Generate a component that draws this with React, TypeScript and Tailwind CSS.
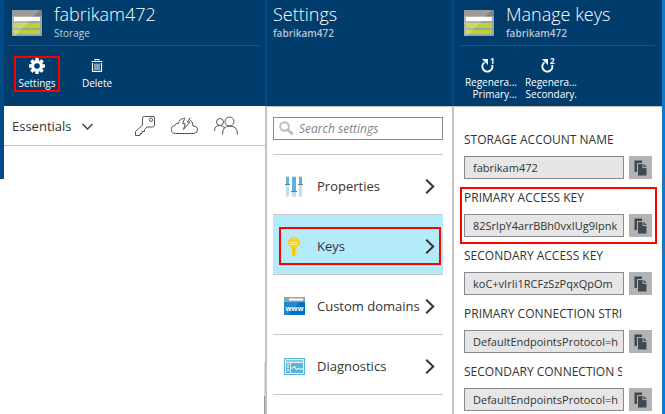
import type { ReactNode } from 'react';

function StorageIcon() {
  return (
    <svg className="h-[26px] w-[30px] shrink-0" viewBox="0 0 30 26" aria-hidden="true">
      <rect width="30" height="26" rx="1" fill="#a0a1a2" />
      <rect width="30" height="6" rx="1" fill="#7f8183" />
      <rect x="2" y="7" width="26" height="4" fill="#fff" />
      <rect x="2" y="13" width="26" height="5" fill="#b8d432" />
      <rect x="2" y="20" width="26" height="4" fill="#b8d432" />
      <path d="M0 0h28L3 26H0z" fill="#fff" fillOpacity=".22" />
    </svg>
  );
}

function GearIcon() {
  return (
    <svg className="h-4 w-4" viewBox="0 0 16 16" aria-hidden="true">
      <g fill="#fff">
        <rect x="6.3" y="0" width="3.4" height="16" rx=".6" />
        <rect x="6.3" y="0" width="3.4" height="16" rx=".6" transform="rotate(45 8 8)" />
        <rect x="6.3" y="0" width="3.4" height="16" rx=".6" transform="rotate(90 8 8)" />
        <rect x="6.3" y="0" width="3.4" height="16" rx=".6" transform="rotate(135 8 8)" />
        <circle cx="8" cy="8" r="6" />
      </g>
      <circle cx="8" cy="8" r="2.8" fill="#003c6c" />
    </svg>
  );
}

function TrashIcon() {
  return (
    <svg className="h-4 w-4" viewBox="0 0 16 16" fill="none" stroke="#fff" aria-hidden="true">
      <path d="M6 2.5V1.5h4v1M2.500 3.5h11M3.500 5v8.5h9V5" strokeWidth="1.200" />
      <path d="M6 5.500v7M8 5.500v7M10 5.500v7" />
    </svg>
  );
}

function RegenerateIcon({ index }: { index: string }) {
  return (
    <svg className="mr-1 h-4 w-4 overflow-visible" viewBox="0 0 16 16" aria-hidden="true">
      <path d="M4.5 5.5a5 5 0 1 0 7.6 2.5" fill="none" stroke="#fff" strokeWidth="2" />
      <path d="M2 2h6v6z" fill="#fff" />
      <text x="10" y="7" fontSize="8" fontWeight="700" fill="#fff">{index}</text>
    </svg>
  );
}

function Chevron() {
  return (
    <svg className="h-4 w-[10px] shrink-0" viewBox="0 0 10 16" fill="none" stroke="#333" strokeWidth="2" aria-hidden="true">
      <path d="M1.2 1.8L8.2 8.500L1.2 15.2" />
    </svg>
  );
}

function CopyIcon() {
  return (
    <svg className="h-4 w-[13px]" viewBox="0 0 13 16" aria-hidden="true">
      <path d="M.5 12V.5H8V3H3v9z" fill="#3f4954" />
      <path d="M4 4h4.5v4H12.5v7.5H4z" fill="#3f4954" />
      <path d="M9.5 3.8l3.2 3.2H9.5z" fill="#3f4954" />
    </svg>
  );
}

function PropertiesIcon() {
  return (
    <svg className="h-[21px] w-[18px]" viewBox="0 0 18 21" aria-hidden="true">
      <path d="M1 0h3v21H1zM7 0h4v21H7zM14 0h3v21h-3z" fill="#dfe3e5" />
      <path d="M1 9h3v11H1zM7 16h4v4H7zM14 9h3v11h-3z" fill="#b8e0f2" />
      <path d="M1 1h3v7H1zM7 1h4v14H7zM14 1h3v7h-3z" fill="#59b4d9" />
      <path d="M0 8h5v1H0zM6 15h6v1H6zM13 8h5v1h-5z" fill="#7a7a7a" />
    </svg>
  );
}

function YellowKeyIcon() {
  return (
    <svg className="h-[21px] w-[14px]" viewBox="0 0 14 21" aria-hidden="true">
      <path d="M7 0L10 1.500L13.500 6L12.500 9L9 12v1.500l1 1-1 1 1 1-1 1V19l-2 2-2-2v-7L1.500 9 .5 6 4 1.500z" fill="#fcd116" />
      <circle cx="7" cy="2.600" r="1.200" fill="#b3ebfb" />
      <path d="M3 6.500h8M3 8.500h8" stroke="#fbe98c" />
      <path d="M6.500 12v7" stroke="#e5b800" />
    </svg>
  );
}

function DomainIcon() {
  return (
    <svg className="h-[18px] w-[21px]" viewBox="0 0 21 18" aria-hidden="true">
      <rect width="21" height="18" fill="#0072c6" />
      <rect width="21" height="5" fill="#a0a1a2" />
      <path d="M5 1.500h14v2H5z" fill="#fff" />
      <circle cx="2.700" cy="2.500" r="1.700" fill="#59b4d9" />
      <path d="M0 5h16L4 18H0z" fill="#fff" fillOpacity=".15" />
      <text x="10.500" y="13.500" fontSize="7" fontWeight="700" fill="#fff" textAnchor="middle">www</text>
    </svg>
  );
}

function DiagnosticsIcon() {
  return (
    <svg className="h-[17px] w-[21px]" viewBox="0 0 21 17" aria-hidden="true">
      <rect width="21" height="17" fill="#59b4d9" />
      <path d="M1.500 1.500h18v14h-18zM1.500 4.500h18M6.500 4.500v11" fill="none" stroke="#e8f6fc" />
      <path d="M2 2.500h17v1H2z" fill="#b8e0f2" />
      <path d="M4 6v8" stroke="#fff" strokeWidth="1.500" strokeDasharray="1.500 1" />
      <path d="M7 10h2l1.500-2 2 4 1.500-2 1.500 1h3.500" fill="none" stroke="#fff" />
    </svg>
  );
}

function BladeTitle({ title, subtitle, strong, icon }: { title: string; subtitle: string; strong?: boolean; icon?: boolean }) {
  return (
    <div className="flex h-[45px] gap-3 px-1">
      {icon && <div className="pt-[10px]"><StorageIcon /></div>}
      <div className="min-w-0 pt-[2px] whitespace-nowrap">
        <h1 className="text-[18px] leading-6 font-light">{title}</h1>
        <p className={strong ? 'text-[10px] leading-[14px] font-semibold text-[#b9c6d3]' : 'text-[10px] leading-[14px] text-[#c4d0db]'}>{subtitle}</p>
      </div>
    </div>
  );
}

function Command({ label, children, highlighted }: { label: string; children: ReactNode; highlighted?: boolean }) {
  return (
    <button type="button" className={highlighted
      ? 'flex h-9 w-[46px] flex-col items-center border-2 border-[#f00] text-[10px] leading-[14px]'
      : 'flex h-9 w-[46px] flex-col items-center border-2 border-transparent text-[10px] leading-[14px]'}>
      {children}
      <span className="mt-[2px]">{label}</span>
    </button>
  );
}

function RegenerateCommand({ index, target }: { index: string; target: string }) {
  return (
    <button type="button" className="flex w-[54px] flex-col items-center text-[10px] leading-3">
      <RegenerateIcon index={index} />
      <span className="mt-[3px] flex w-full flex-col items-end whitespace-nowrap">
        <span>Regenera...</span>
        <span>{target}</span>
      </span>
    </button>
  );
}

const settings = [
  { name: 'Properties', icon: <PropertiesIcon /> },
  { name: 'Keys', icon: <YellowKeyIcon />, selected: true },
  { name: 'Custom domains', icon: <DomainIcon /> },
  { name: 'Diagnostics', icon: <DiagnosticsIcon /> },
];

const fields = [
  { id: 'account', label: 'STORAGE ACCOUNT NAME', value: 'fabrikam472' },
  { id: 'primary-key', label: 'PRIMARY ACCESS KEY', value: '82SrlpY4arrBBh0vxIUg9Ipnk', highlighted: true },
  { id: 'secondary-key', label: 'SECONDARY ACCESS KEY', value: 'koC+vIrIi1RCFzSzPqxQpOm' },
  { id: 'primary-conn', label: 'PRIMARY CONNECTION STRING', value: 'DefaultEndpointsProtocol=https' },
  { id: 'secondary-conn', label: 'SECONDARY CONNECTION STRING', value: 'DefaultEndpointsProtocol=https' },
];

function Divider() {
  return (
    <div className="flex w-[2px] flex-col">
      <div className="h-[106px] bg-[#004a87]" />
      <div className="flex-1 bg-[#c3c3c3]" />
    </div>
  );
}

function StorageBlade() {
  return (
    <section className="flex min-w-0 flex-col">
      <header className="h-[106px] bg-[#003c6c] px-1 text-white">
        <div className="border-b border-[#1b5180] pr-[2px]"><BladeTitle title="fabrikam472" subtitle="Storage" icon /></div>
        <div className="flex gap-[14px] px-[6px] pt-[10px]">
          <Command label="Settings" highlighted><GearIcon /></Command>
          <Command label="Delete"><TrashIcon /></Command>
        </div>
      </header>
      <div className="flex h-10 items-center border-b border-[#c3c3c3] pl-2 text-[#333]">
        <button type="button" className="flex items-center gap-[10px] pt-[2px] text-[13px]">
          Essentials
          <svg className="h-[7px] w-[11px]" viewBox="0 0 11 7" fill="none" stroke="#444" strokeWidth="1.500" aria-hidden="true"><path d="M.5 1l5 5 5-5" /></svg>
        </button>
        <div className="ml-auto flex items-center gap-4 pr-[27px]">
          <svg className="h-5 w-5" viewBox="0 0 20 20" fill="none" stroke="#555" aria-hidden="true">
            <path d="M7.500 2Q7.500 .5 9.500.5H18q1.500 0 1.500 1.500v7q0 2-2 2h-5.500L9.500 13.500v2H7v2H5v2H.5v-4L7.500 9z" />
            <circle cx="16" cy="3.800" r="1.600" />
          </svg>
          <svg className="h-5 w-[27px]" viewBox="0 0 27 20" fill="none" stroke="#555" aria-hidden="true">
            <path d="M10 17.500H4.500a4 4 0 0 1-.5-8q.5-2.500 3.500-2.200Q8.500 2.500 12.500 2.500M18.500 3.500q3.500 1.500 3.500 6.500 4.500 0 4.500 4 0 3.500-4 3.500H10" />
            <path d="M14 1.500l-2.500 6.300h2.800L12.500 13.500l6.500-7.500h-2.700l3-4.500" />
          </svg>
          <svg className="h-5 w-6" viewBox="0 0 24 20" fill="none" stroke="#555" aria-hidden="true">
            <circle cx="6" cy="6" r="3.500" />
            <circle cx="15.500" cy="5.500" r="4.500" />
            <path d="M.5 15q0-5.500 5.500-5.500 3 0 4.500 2.500M8.500 18.500q0-8.500 7-8.500 8 0 8 8.500" />
          </svg>
        </div>
      </div>
      <div className="flex flex-1 justify-end">
        <div className="flex w-px flex-col pt-[216px]">
          <div className="h-[34px] bg-[#dedede]" />
          <div className="flex-1 bg-[#999]" />
        </div>
      </div>
    </section>
  );
}

function SettingsBlade() {
  return (
    <section className="flex min-w-0 flex-col">
      <header className="h-[106px] bg-[#003c6c] pl-[2px] text-white"><BladeTitle title="Settings" subtitle="fabrikam472" strong /></header>
      <div className="border-t border-[#c3c3c3] pt-[10px] pr-[9px] pl-[6px] text-[#333]">
        <label className="flex h-[23px] items-center gap-[5px] border border-[#888a8f] pl-[5px]">
          <svg className="h-[15px] w-[15px] shrink-0" viewBox="0 0 15 15" fill="none" stroke="#bdbdbd" strokeWidth="2" aria-hidden="true">
            <circle cx="5.500" cy="5.500" r="4.300" /><path d="M8.800 8.800l5 4.800" strokeWidth="2.800" />
          </svg>
          <input type="search" aria-label="Search settings" placeholder="Search settings" className="w-full min-w-0 bg-transparent text-[12px] italic outline-none placeholder:text-[#858585]" />
        </label>
        <nav className="mt-[14px] border-t border-[#c8c8c8]">
          {settings.map((item) => (
            <a key={item.name} href="#" className={item.selected
              ? 'flex h-[60px] border-b border-[#c8c8c8] bg-[#b3ebfb] pt-3 pr-[2px] pb-[9px] pl-[6px]'
              : 'flex h-[60px] border-b border-[#c8c8c8] pt-3 pr-[2px] pb-[9px] pl-[6px]'}>
              <span className={item.selected
                ? 'flex min-w-0 flex-1 items-center border-2 border-[#f00] pr-1'
                : 'flex min-w-0 flex-1 items-center border-2 border-transparent pr-1'}>
                <span className="flex w-[26px] shrink-0 justify-center">{item.icon}</span>
                <span className="ml-[10px] flex-1 text-[13px] leading-5 whitespace-nowrap">{item.name}</span>
                <Chevron />
              </span>
            </a>
          ))}
        </nav>
      </div>
    </section>
  );
}

function KeysBlade() {
  return (
    <section className="flex min-w-0 flex-col">
      <header className="h-[106px] bg-[#003c6c] pr-[7px] pl-[6px] text-white">
        <div className="border-b border-[#1b5180]"><BladeTitle title="Manage keys" subtitle="fabrikam472" strong icon /></div>
        <div className="flex gap-[6px] pt-[11px] pl-[3px]">
          <RegenerateCommand index="1" target="Primary..." />
          <RegenerateCommand index="2" target="Secondary." />
        </div>
      </header>
      <div className="flex flex-col gap-px border-t border-[#c3c3c3] pt-[22px] pr-[5px] pl-[6px] text-[#333]">
        {fields.map((field) => (
          <div key={field.id} className={field.highlighted
            ? 'border-2 border-[#f00] pr-[3px] pb-[5px] pl-[2px]'
            : 'border-2 border-transparent pr-[3px] pb-[5px] pl-[2px]'}>
            <label htmlFor={field.id} className="mr-[30px] block overflow-hidden text-[12px] leading-[18px] whitespace-nowrap">{field.label}</label>
            <div className="mt-[7px] flex gap-[5px]">
              <input id={field.id} readOnly value={field.value} className="h-[23px] min-w-0 flex-1 border border-[#888a8f] bg-[#e6e6e6] pr-[5px] pl-2 text-[11px] outline-none" />
              <button type="button" aria-label="Copy" className="flex h-[23px] w-[23px] items-center justify-center bg-[#b3b3b3]"><CopyIcon /></button>
            </div>
          </div>
        ))}
      </div>
    </section>
  );
}

export default function App() {
  return (
    <main className="grid h-screen grid-cols-[4px_minmax(0,261fr)_2px_minmax(0,185fr)_2px_minmax(0,208fr)_3px] overflow-hidden bg-white font-['Open_Sans','Noto_Sans',sans-serif]">
      <div className="h-[179px] bg-[#004a87]" />
      <StorageBlade />
      <Divider />
      <SettingsBlade />
      <Divider />
      <KeysBlade />
      <div className="bg-[#1278cc]" />
    </main>
  );
}
